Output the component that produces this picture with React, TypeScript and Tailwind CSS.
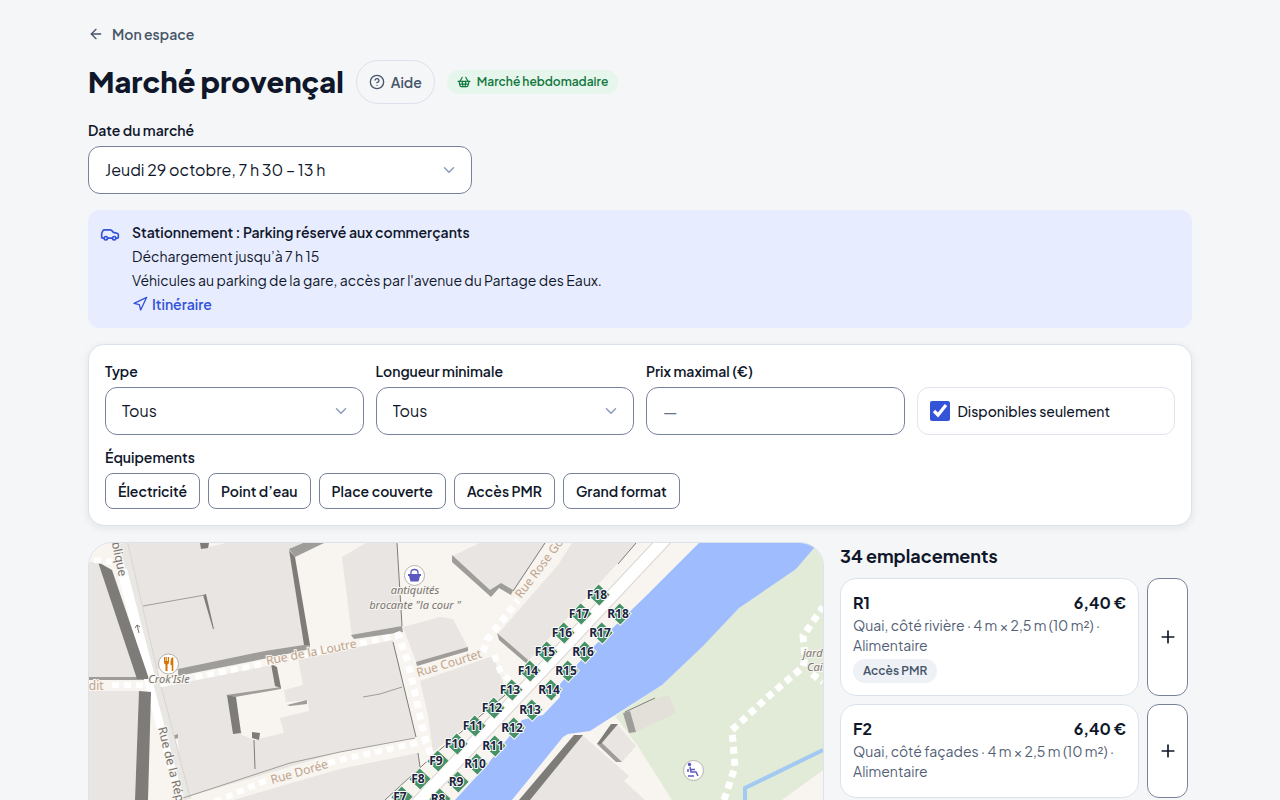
import React, { useState } from 'react'
import { ArrowLeft, Car, ChevronDown, CircleHelp, Navigation, Plus, ShoppingBasket } from 'lucide-react'

const equipments = ['Électricité', 'Point d’eau', 'Place couverte', 'Accès PMR', 'Grand format']

const stalls = [
    { code: 'R1', price: '6,40 €', details: 'Quai, côté rivière · 4 m × 2,5 m (10 m²) · Alimentaire', tags: ['Accès PMR'] },
    { code: 'F2', price: '6,40 €', details: 'Quai, côté façades · 4 m × 2,5 m (10 m²) · Alimentaire', tags: [] },
]

const stands: [string, number, number][] = [
    ['F18', 597, 595], ['F17', 579, 614], ['F16', 562, 633], ['F15', 545, 652], ['F14', 528, 671], ['F13', 510, 690],
    ['F12', 492, 708], ['F11', 473, 726], ['F10', 455, 744], ['F9', 436, 761], ['F8', 418, 779], ['F7', 400, 797],
    ['R18', 618, 614], ['R17', 600, 633], ['R16', 583, 652], ['R15', 566, 671], ['R14', 549, 690], ['R13', 530, 710],
    ['R12', 512, 728], ['R11', 493, 746], ['R10', 475, 764], ['R9', 456, 782], ['R8', 438, 799],
]

const buildings = [
    '89,562 98,562 137,677 89,677',
    '89,691 139,691 135,800 89,800',
    '128,543 303,543 289,549 305,645 180,671 157,668',
    '342,557 366,543 397,543 402,627 352,637',
    '158,688 393,640 416,737 340,752 187,797',
    '230,801 340,769 418,753 420,767 385,800',
    '403,627 440,617 453,619 468,648 417,664',
    '420,681 493,656 504,685 508,692 433,752 428,715',
    '452,556 480,543 545,543 513,593 501,584 491,595',
    '572,543 637,543 617,564 527,662 498,634 558,565',
    '617,724 636,746 622,762 598,742',
    '582,735 629,776 624,781 645,800 525,800',
]

const courtyards = [
    '209,543 226,543 209,547',
    '275,665 298,659 303,685 284,690 286,702 308,700 309,711 280,718 284,733 254,740 242,735 235,697 280,687',
    '169,741 178,738 179,752 171,750',
]

const darkWalls = [
    '98,562 112,570 149,679 137,679',
    '139,691 151,692 148,800 135,800',
    '289,550 295,557 310,645 304,645',
    '200,543 209,543 208,548 201,549',
    '203,595 206,594 214,629 213,629',
    '227,695 236,697 241,733 233,734',
    '271,664 277,667 281,688 275,686',
    '252,732 260,733 259,740 252,738',
    '597,744 611,724 618,724 601,744',
    '519,800 574,735 583,735 530,800',
]

const lightWalls = [
    '89,677 147,677 147,680 89,680',
    '289,549 303,543 324,543 295,557',
    '178,669 265,651 310,644 310,649 268,658 178,676',
    '351,635 402,626 403,632 354,639',
    '226,695 281,687 281,689 235,697',
    '287,705 307,700 307,704 290,706',
    '169,737 178,734 178,738 172,740',
    '416,662 468,647 468,651 417,666',
    '452,555 490,590 501,583 513,590 511,595 499,588 491,597 452,562',
    '497,633 528,660 527,664 499,640',
    '623,713 630,711 636,732 629,733',
    '597,744 602,743 622,762 616,762',
]

function TownMap() {
    return (
        <svg viewBox="89 543 734 480" width="734" height="480" className="block" role="img" aria-label="Plan du marché" fontFamily="'Noto Sans', sans-serif">
            <rect x="89" y="543" width="734" height="480" fill="#f8f4ef" />
            {/* Park and river */}
            <polygon points="823,543 814,543 739,608 662,685 615,716 637,745 672,800 782,800 823,770" fill="#e1ebd7" />
            <polygon points="699,543 820,543 814,548 796,569 739,608 703,646 662,685 590,731 568,734 563,737 512,800 455,800 487,765 522,720 543,715 560,697 560,684 590,650 647,595" fill="#9fbdfe" />
            <polyline points="745,800 745,788 823,750" fill="none" stroke="#a2c9f1" strokeWidth="4" />

            {/* Buildings */}
            {buildings.map((points) => <polygon key={points} points={points} fill="#e8e5e2" />)}
            <polygon points="624,713 655,699 669,695 676,713 636,732" fill="#e3e0d9" />
            {courtyards.map((points) => <polygon key={points} points={points} fill="#f8f4ef" />)}
            {lightWalls.map((points) => <polygon key={points} points={points} fill="#9f9d99" />)}

            {/* Streets */}
            <g fill="none">
                <path d="M121 543 154 685 184 800" stroke="#d8d5d1" strokeWidth="14" />
                <path d="M121 543 154 685 184 800" stroke="#e9e7e4" strokeWidth="12" />
                <path d="M115 543 150 687 180 800" stroke="#fff" strokeWidth="8" />
                <path d="M122 570 152 685" stroke="#fff" strokeWidth="10" />
            </g>
            {darkWalls.map((points) => <polygon key={points} points={points} fill="#7e7c79" />)}
            <g fill="none" stroke="#fff" strokeDasharray="7 5">
                <path d="M94 560 115 562" strokeWidth="6" />
                <path d="M112 685H150M160 684 268 663 400 635" strokeWidth="6" />
                <path d="M215 802 262 782 340 760 425 741" strokeWidth="6" />
                <path d="M397 632 408 662 425 738 432 758" strokeWidth="7" />
                <path d="M483 652 487 640 518 600" strokeWidth="7" />
                <path d="M494 655 501 673 512 682" strokeWidth="6" />
                <path d="M724 800 735 767 732 730 770 695 803 667 805 658 803 636 823 607M812 674 823 682" strokeWidth="7" />
            </g>
            <g fill="none" stroke="#7e7c79">
                <path d="M397 543 402 626M393 642 416 737M418 753 420 767M385 800 436 753 510 691M513 591 545 543M636 543 618 564M625 712 655 698M254 740 255 769" />
                <path d="M143 606 205 595M363 697 380 694 402 687M180 799 290 763 340 752 415 738" stroke="#9f9d99" />
            </g>
            <path d="M667 537 414 807" fill="none" stroke="#d8d5d1" strokeWidth="14" />
            <path d="M667 537 414 807" fill="none" stroke="#fff" strokeWidth="12" />

            {/* Street names */}
            <g fill="#bfa48e" stroke="#f8f4ef" strokeWidth="2" paintOrder="stroke" fontSize="12">
                <text transform="translate(267 665) rotate(-11)">Rue de la Loutre</text>
                <text transform="translate(272 784) rotate(-16)">Rue Dorée</text>
                <text transform="translate(418 677) rotate(-17)">Rue Courtet</text>
                <text transform="translate(521 599) rotate(-53)">Rue Rose Gou</text>
                <text x="82" y="690">edit</text>
                <g fill="#77746f">
                    <text transform="translate(119 577) rotate(78)" textAnchor="end">publique</text>
                    <text transform="translate(158 728) rotate(76)">Rue de la Répu</text>
                </g>
            </g>
            <path d="M139 633 137 625M135 628 137 625 140 627" fill="none" stroke="#77746f" />

            {/* Places */}
            <g fill="#77746f" stroke="#f8f4ef" strokeWidth="2" paintOrder="stroke" fontSize="11" fontStyle="italic" textAnchor="middle">
                <text x="415" y="594">antiquités</text>
                <text x="415" y="609">brocante "la cour "</text>
                <text x="169" y="683">Crok'Isle</text>
                <text x="803" y="657" textAnchor="start">jardi</text>
                <text x="807" y="671" textAnchor="start">Cail</text>
            </g>
            <g fill="#fff" stroke="#b5b3b0">
                <circle cx="168.500" cy="664" r="10" />
                <circle cx="414.500" cy="575.500" r="10" />
                <circle cx="693.500" cy="770.500" r="10" />
            </g>
            <path d="M164 657v5q0 2 1.500 2.500V671h2v-6.500q1.500-.5 1.500-2.500v-5h-1v4h-.8v-4h-.9v4h-.8v-4ZM173 657q-2.500 1-2.500 5v3h1.200v6h1.600v-14Z" fill="#d97300" />
            <path d="M411 574v-1.500q0-3 3.500-3t3.500 3V574" fill="none" stroke="#5b59c0" strokeWidth="1.300" />
            <path d="M408 574h13v2h-1l-1.500 5.500h-8L409 576h-1Z" fill="#5b59c0" />
            <g fill="none" stroke="#5b59c0" strokeWidth="1.500">
                <circle cx="689.500" cy="764.500" r="1" fill="#5b59c0" />
                <path d="M690 767 691 772H696L698 776M691 769.500H695M688 769V772M688 776H694" />
            </g>

            {/* Stands */}
            {stands.map(([code, x, y]) => (
                <g key={code}>
                    <rect x={x - 6} y={y - 8} width="16" height="16" transform={`rotate(43 ${x + 2} ${y})`} fill="#459268" stroke="#f8f4ef" />
                    <text x={x} y={y + 4} textAnchor="middle" fontSize="12" fontWeight="700" fill="#1b2440" stroke="#fff" strokeWidth="2" strokeLinejoin="round" paintOrder="stroke">{code}</text>
                </g>
            ))}
        </svg>
    )
}

function SelectField({ id, label, options }: { id: string; label: string; options: string[] }) {
    return (
        <div className="flex flex-col gap-[6px]">
            <label htmlFor={id} className="text-sm font-semibold">{label}</label>
            <div className="grid items-center">
                <select id={id} className="col-start-1 row-start-1 h-12 w-full appearance-none rounded-xl border border-[#77839c] bg-white pr-10 pl-4 text-base">
                    {options.map((o) => <option key={o}>{o}</option>)}
                </select>
                <ChevronDown size={18} className="pointer-events-none col-start-1 row-start-1 mr-[14px] justify-self-end text-[#8c9cb8]" />
            </div>
        </div>
    )
}

export default function App() {
    const [available, setAvailable] = useState(true)
    const [selected, setSelected] = useState<string[]>([])

    const toggle = (name: string) => {
        setSelected(selected.includes(name) ? selected.filter((n) => n !== name) : [...selected, name])
    }

    return (
        <div className="h-screen overflow-hidden bg-[#f5f6f8] font-['Plus_Jakarta_Sans',Inter,sans-serif] text-[#0f172a]">
            <main className="mx-auto flex max-w-6xl flex-col gap-4 px-6 pt-6">
                <a href="#" className="flex items-center gap-2 self-start text-sm font-semibold text-[#475569]">
                    <ArrowLeft size={16} />
                    Mon espace
                </a>

                <div className="flex flex-wrap items-center gap-3">
                    <h1 className="text-[29px] font-extrabold">Marché provençal</h1>
                    <button className="flex h-11 items-center gap-[6px] rounded-full border border-[#dde1ee] px-3 text-sm font-semibold text-[#475569]">
                        <CircleHelp size={16} />
                        Aide
                    </button>
                    <span className="flex h-6 items-center gap-[6px] rounded-full bg-[#e6f6ec] px-[10px] text-xs font-semibold text-[#13783f]">
                        <ShoppingBasket size={14} />
                        Marché hebdomadaire
                    </span>
                </div>

                <div className="w-full max-w-96">
                    <SelectField id="date" label="Date du marché" options={['Jeudi 29 octobre, 7 h 30 – 13 h']} />
                </div>

                <section className="flex gap-3 rounded-xl bg-[#e8ecff] px-3 py-[10px] text-sm leading-6">
                    <Car size={20} className="mt-1 shrink-0 text-[#3454d8]" />
                    <div>
                        <p className="font-semibold">Stationnement : Parking réservé aux commerçants</p>
                        <p>Déchargement jusqu’à 7 h 15</p>
                        <p>Véhicules au parking de la gare, accès par l'avenue du Partage des Eaux.</p>
                        <a href="#" className="inline-flex items-center gap-1 font-semibold text-[#3454d8]">
                            <Navigation size={16} />
                            Itinéraire
                        </a>
                    </div>
                </section>

                <section className="flex flex-col gap-3 rounded-2xl border border-[#dce2ec] bg-white p-4 shadow-[0_2px_8px_rgba(15,23,42,0.08)]">
                    <div className="grid grid-cols-4 items-end gap-3">
                        <SelectField id="type" label="Type" options={['Tous', 'Alimentaire']} />
                        <SelectField id="length" label="Longueur minimale" options={['Tous', '4 m']} />
                        <div className="flex flex-col gap-[6px]">
                            <label htmlFor="price" className="text-sm font-semibold">Prix maximal (€)</label>
                            <input id="price" placeholder="—" className="h-12 w-full rounded-xl border border-[#77839c] px-4 text-base placeholder:text-[#64748b]" />
                        </div>
                        <label className="flex h-12 items-center gap-2 rounded-xl border border-[#e0e4ee] px-3 text-sm font-medium">
                            <input type="checkbox" checked={available} onChange={(e) => setAvailable(e.target.checked)} className="size-5 accent-[#3454d8]" />
                            Disponibles seulement
                        </label>
                    </div>
                    <div className="flex flex-col gap-[6px]">
                        <p className="text-sm font-semibold">Équipements</p>
                        <div className="flex flex-wrap gap-2">
                            {equipments.map((name) => (
                                <button
                                    key={name}
                                    onClick={() => toggle(name)}
                                    className={`h-9 rounded-lg border border-[#77839c] px-3 text-sm font-semibold ${selected.includes(name) ? 'bg-[#e8ecff]' : 'bg-white'}`}
                                >
                                    {name}
                                </button>
                            ))}
                        </div>
                    </div>
                </section>

                <div className="grid grid-cols-[1fr_352px] gap-4">
                    <div className="overflow-hidden rounded-3xl border border-[#dce2ec] bg-[#f8f4ef]">
                        <TownMap />
                    </div>
                    <section>
                        <h2 className="text-lg font-bold">34 emplacements</h2>
                        <ul className="mt-2 flex flex-col gap-2 pr-1">
                            {stalls.map((stall) => (
                                <li key={stall.code} className="flex gap-2">
                                    <button className="flex-1 rounded-2xl border border-[#dce2ec] bg-white p-3 text-left">
                                        <span className="flex justify-between font-bold">
                                            <span>{stall.code}</span>
                                            <span>{stall.price}</span>
                                        </span>
                                        <span className="block text-sm text-[#526075]">{stall.details}</span>
                                        <span className="mt-1 flex gap-1">
                                            {stall.tags.map((tag) => (
                                                <span key={tag} className="rounded-full bg-[#eef1f6] px-[10px] text-xs leading-6 font-semibold text-[#475569]">{tag}</span>
                                            ))}
                                        </span>
                                    </button>
                                    <button aria-label={`Ajouter ${stall.code}`} className="flex w-[41px] items-center justify-center rounded-xl border border-[#77839c] bg-white">
                                        <Plus size={20} />
                                    </button>
                                </li>
                            ))}
                        </ul>
                    </section>
                </div>
            </main>
        </div>
    )
}
